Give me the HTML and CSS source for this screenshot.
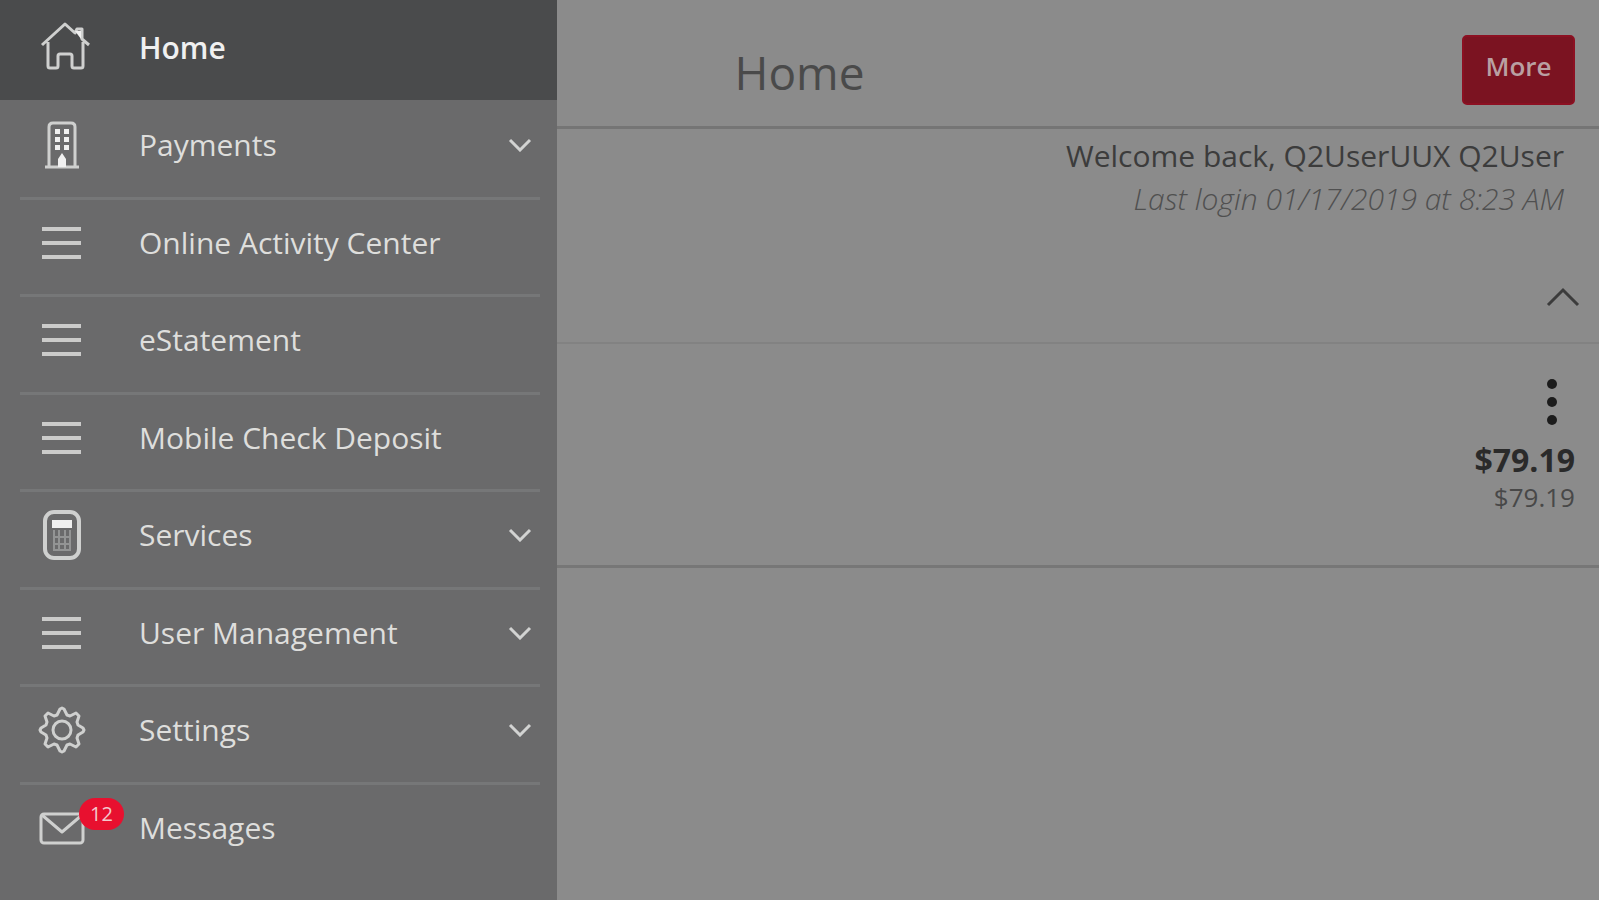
FILE: index.html
```
<!DOCTYPE html>
<html lang="en">
<head>
    <meta charset="utf-8">
    <title>Home</title>
    <link rel="stylesheet" href="styles.css">
</head>
<body>
    <nav class="drawer">
        <ul class="menu">
            <li class="menu-row active">
                <a href="#" class="menu-item">
                    <svg class="icon" viewBox="0 0 56 56">
                        <path d="M8 25 L31 4 L41 13 L43 9 H48 V19 L55 25 M14 22 V46 Q14 48 16 48 H22 Q24 48 24 46 V36 Q24 34 26 34 H36 Q38 34 38 36 V46 Q38 48 40 48 H47 Q49 48 49 46 V22"/>
                        <path class="solid" d="M41 11h6v8z"/>
                    </svg>
                    <span class="label">Home</span>
                </a>
            </li>
            <li class="menu-row">
                <button type="button" class="menu-item">
                    <svg class="icon" viewBox="0 0 56 56">
                        <path d="M15 49 V10 Q15 6 19 6 H37 Q41 6 41 10 V49 M11 50 H45"/>
                        <path class="solid" d="M21 12h5v5h-5zM30 12h5v5h-5zM21 20h5v5h-5zM30 20h5v5h-5zM21 28h5v5h-5zM30 28h5v5h-5zM28 36 L32 42 V50 H24 V42z"/>
                    </svg>
                    <span class="label">Payments</span>
                    <svg class="chevron" viewBox="0 0 24 14"><path d="M2 2 L12 12 L22 2"/></svg>
                </button>
            </li>
            <li class="menu-row">
                <a href="#" class="menu-item">
                    <svg class="icon bars" viewBox="0 0 56 56"><path d="M8 14 H47 M8 28 H47 M8 42 H47"/></svg>
                    <span class="label">Online Activity Center</span>
                </a>
            </li>
            <li class="menu-row">
                <a href="#" class="menu-item">
                    <svg class="icon bars" viewBox="0 0 56 56"><path d="M8 14 H47 M8 28 H47 M8 42 H47"/></svg>
                    <span class="label">eStatement</span>
                </a>
            </li>
            <li class="menu-row">
                <a href="#" class="menu-item">
                    <svg class="icon bars" viewBox="0 0 56 56"><path d="M8 14 H47 M8 28 H47 M8 42 H47"/></svg>
                    <span class="label">Mobile Check Deposit</span>
                </a>
            </li>
            <li class="menu-row">
                <button type="button" class="menu-item">
                    <svg class="icon" viewBox="0 0 56 56">
                        <rect class="thick" x="11" y="5" width="34" height="46" rx="9"/>
                        <path class="thin" d="M20 23 V44 M25 23 V44 M31 23 V44 M36 23 V44 M19 30 H37 M19 37 H37 M19 43 H37"/>
                        <path class="solid" d="M18 13h20v8h-20z"/>
                    </svg>
                    <span class="label">Services</span>
                    <svg class="chevron" viewBox="0 0 24 14"><path d="M2 2 L12 12 L22 2"/></svg>
                </button>
            </li>
            <li class="menu-row">
                <button type="button" class="menu-item">
                    <svg class="icon bars" viewBox="0 0 56 56"><path d="M8 14 H47 M8 28 H47 M8 42 H47"/></svg>
                    <span class="label">User Management</span>
                    <svg class="chevron" viewBox="0 0 24 14"><path d="M2 2 L12 12 L22 2"/></svg>
                </button>
            </li>
            <li class="menu-row">
                <button type="button" class="menu-item">
                    <svg class="icon" viewBox="0 0 56 56">
                        <path d="M28 6 L30 7 L33 13 L36 14 L42 11 L45 14 L43 20 L44 23 L49 26 L50 28 L49 30 L44 33 L43 36 L45 42 L42 45 L36 42 L33 43 L30 49 L28 50 L26 49 L23 43 L20 42 L14 45 L11 42 L13 36 L12 33 L7 30 L6 28 L7 26 L12 23 L13 20 L11 14 L14 11 L20 14 L23 13 L26 7 Z"/>
                        <circle cx="28" cy="28" r="9"/>
                    </svg>
                    <span class="label">Settings</span>
                    <svg class="chevron" viewBox="0 0 24 14"><path d="M2 2 L12 12 L22 2"/></svg>
                </button>
            </li>
            <li class="menu-row">
                <a href="#" class="menu-item">
                    <svg class="icon" viewBox="0 0 56 56">
                        <rect x="7" y="14" width="42" height="29" rx="3"/>
                        <path d="M8 15 L28 32 L48 15"/>
                    </svg>
                    <span class="badge">12</span>
                    <span class="label">Messages</span>
                </a>
            </li>
        </ul>
    </nav>

    <header class="topbar">
        <h1 class="title">Home</h1>
        <button type="button" class="more">More</button>
    </header>

    <main>
        <div class="welcome">
            <p class="greeting">Welcome back, Q2UserUUX Q2User</p>
            <p class="last-login">Last login 01/17/2019 at 8:23 AM</p>
        </div>
        <section class="accounts">
            <div class="accounts-head">
                <button type="button" class="icon-button" aria-label="Collapse accounts">
                    <svg class="collapse" viewBox="0 0 34 20"><path d="M2 18 L17 3 L32 18"/></svg>
                </button>
            </div>
            <div class="account">
                <button type="button" class="icon-button dots" aria-label="Account options">
                    <svg class="kebab" viewBox="0 0 10 46">
                        <circle cx="5" cy="5" r="5"/>
                        <circle cx="5" cy="23" r="5"/>
                        <circle cx="5" cy="41" r="5"/>
                    </svg>
                </button>
                <p class="balance">$79.19</p>
                <p class="available">$79.19</p>
            </div>
        </section>
    </main>
</body>
</html>
```

FILE: styles.css
```
* {
    box-sizing: border-box;
}

body {
    font-family: "Open Sans", "Noto Sans", sans-serif;
    background-color: #8b8b8b;
    color: #3c3c3c;
    margin: 0;
}

p, h1, ul {
    margin: 0;
    padding: 0;
}

button {
    font-family: inherit;
    border: none;
    cursor: pointer;
}

/* Side menu, open over the page */
.drawer {
    position: fixed;
    top: 0;
    left: 0;
    bottom: 0;
    width: 557px;
    background-color: #6a6a6b;
}

.menu {
    display: flex;
    flex-direction: column;
    height: 100%;
    padding-bottom: 18px;
    list-style: none;
}

.menu-row {
    flex: 1;
    display: flex;
    margin: 0 17px 0 20px;
    border-bottom: 3px solid #767778;
}

.menu-row:last-child {
    border-bottom-color: transparent;
}

.menu-row.active {
    flex: none;
    height: 100px;
    margin: 0 0 2px;
    padding: 0 17px 0 20px;
    border-bottom: none;
    background-color: #4a4b4c;
    font-weight: 600;
}

.menu-item {
    position: relative;
    flex: 1;
    display: flex;
    align-items: center;
    padding: 0 8px 8px 14px;
    background: none;
    color: #dededc;
    font-size: 30px;
    font-weight: inherit;
    line-height: 40px;
    text-align: left;
    text-decoration: none;
}

.active .menu-item {
    padding-bottom: 4px;
    color: #f0f0f0;
}

.label {
    flex: 1;
}

.icon {
    width: 56px;
    height: 56px;
    margin-right: 49px;
    overflow: visible;
    fill: none;
    stroke: #cfd0cf;
    stroke-width: 3;
    stroke-linejoin: round;
}

.icon .solid {
    fill: #f0f0f0;
    stroke: none;
}

.icon .thick {
    stroke-width: 4;
}

.icon .thin {
    stroke: #939494;
    stroke-width: 2;
}

.bars {
    stroke: #cbcbca;
    stroke-width: 4;
}

.chevron {
    width: 24px;
    height: 14px;
    fill: none;
    stroke: #d2d3d2;
    stroke-width: 3;
}

.badge {
    position: absolute;
    top: 13px;
    left: 59px;
    width: 45px;
    border-radius: 16px;
    background-color: #e8102f;
    color: #f3c8cc;
    font-size: 20px;
    line-height: 32px;
    text-align: center;
}

/* Page header */
.topbar {
    display: grid;
    grid-template-columns: 1fr auto 1fr;
    align-items: center;
    height: 129px;
    padding: 14px 24px 0;
    border-bottom: 3px solid #757575;
}

.title {
    grid-column: 2;
    padding-top: 4px;
    color: #4a4a4a;
    font-size: 46px;
    font-weight: 400;
    line-height: 60px;
}

.more {
    justify-self: end;
    width: 113px;
    height: 70px;
    padding: 0 0 8px;
    border: 2px solid #8c1022;
    border-radius: 5px;
    background-color: #7b1321;
    color: #b9a0a2;
    font-size: 26px;
    font-weight: 600;
}

/* Greeting */
.welcome {
    padding: 6px 35px 0;
    text-align: right;
}

.greeting {
    font-size: 30px;
    line-height: 42px;
}

.last-login {
    color: #505050;
    font-size: 30px;
    font-style: italic;
    font-weight: 300;
    line-height: 44px;
}

/* Accounts */
.accounts {
    border-bottom: 3px solid #777777;
}

.accounts-head {
    display: flex;
    justify-content: flex-end;
    align-items: flex-end;
    height: 123px;
    padding: 0 19px 35px;
    border-bottom: 2px solid #828282;
}

.icon-button {
    display: flex;
    padding: 0;
    background: none;
}

.collapse {
    width: 34px;
    height: 20px;
    fill: none;
    stroke: #3c3c3c;
    stroke-width: 3;
}

.account {
    display: flex;
    flex-direction: column;
    align-items: flex-end;
    padding: 35px 24px 53px;
}

.dots {
    margin: 0 18px 13px 0;
}

.kebab {
    width: 10px;
    height: 46px;
    fill: #1c1c1c;
}

.balance {
    color: #2a2a2a;
    font-size: 32px;
    font-weight: 700;
    line-height: 44px;
}

.available {
    color: #484848;
    font-size: 26px;
    line-height: 30px;
}
```
